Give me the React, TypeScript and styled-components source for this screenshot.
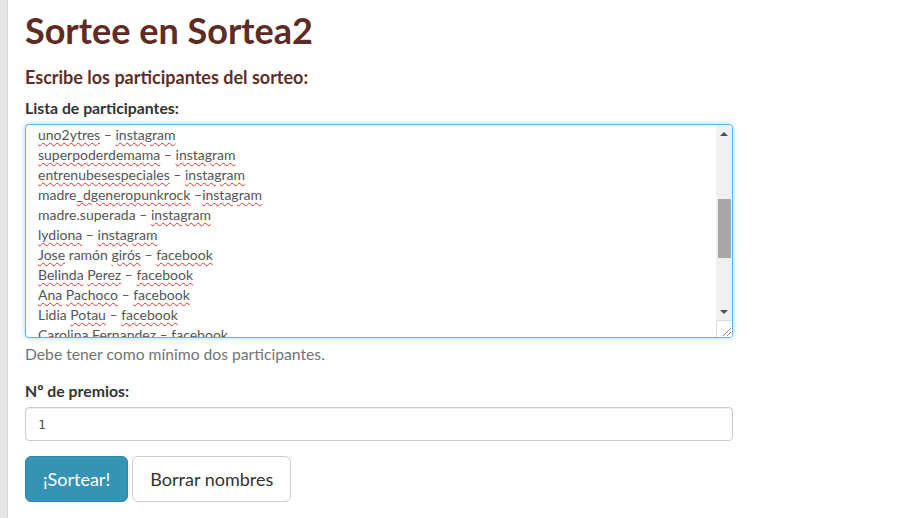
import React from "react";
import styled, { createGlobalStyle } from "styled-components";

const Global = createGlobalStyle`
  html, body { margin: 0; padding: 0; background: #fff; }
  body { font-family: Lato, "Open Sans", sans-serif; color: #333; }
`;

const Page = styled.div`
  display: flex;
  min-height: 518px;
`;

const SideStrip = styled.div`
  width: 7px;
  flex: 0 0 7px;
  background: #e6e6e6;
  border-right: 1px solid #d6d6d6;
`;

const Main = styled.main`
  padding-left: 17px;
  width: 708px;
`;

const Title = styled.h1`
  margin: 10px 0 0;
  font-size: 36px;
  line-height: 40px;
  font-weight: 700;
  color: #5e2b25;
`;

const Subtitle = styled.h3`
  margin: 17px 0 0;
  font-size: 18px;
  line-height: 20px;
  font-weight: 700;
  color: #5e2f29;
`;

const Label = styled.label<{ $top: number }>`
  display: block;
  margin: ${(p) => p.$top}px 0 6px;
  font-size: 15.8px;
  line-height: 20px;
  font-weight: 700;
  color: #333;
`;

const ListFrame = styled.div`
  box-sizing: border-box;
  display: flex;
  height: 214px;
  border: 1px solid #66afe9;
  border-radius: 4px;
  box-shadow: inset 0 1px 1px rgba(0, 0, 0, 0.05), 0 0 5px rgba(102, 175, 233, 0.55);
  background: #fff;
  overflow: hidden;
`;

const ListText = styled.div`
  flex: 1;
  padding: 0 12px;
  overflow: hidden;
  font-size: 14px;
  line-height: 20px;
  color: #555;
`;

const ScrollBar = styled.div`
  width: 16px;
  flex: 0 0 16px;
  display: flex;
  flex-direction: column;
  background: #f0f0f0;
`;

const ArrowButton = styled.div<{ $down?: boolean }>`
  height: 17px;
  display: flex;
  align-items: center;
  justify-content: center;
  &::after {
    content: "";
    width: 0;
    height: 0;
    border-left: 4px solid transparent;
    border-right: 4px solid transparent;
    ${(p) => (p.$down ? "border-top: 4px solid #4f4f4f;" : "border-bottom: 4px solid #4f4f4f;")}
  }
`;

const Track = styled.div`
  flex: 1;
  display: flex;
  flex-direction: column;
  align-items: center;
`;

const Thumb = styled.div`
  margin-top: 57px;
  width: 13px;
  height: 59px;
  background: #a8a8a8;
`;

const Resizer = styled.div`
  box-sizing: border-box;
  height: 17px;
  background: #fff;
  border-top: 1px solid #dcdcdc;
  border-left: 1px solid #dcdcdc;
  display: flex;
  align-items: flex-end;
  justify-content: flex-end;
  svg { display: block; }
`;

const Line = styled.div`
  white-space: nowrap;
`;

const Miss = styled.span`
  text-decoration: underline wavy #e0352e;
  text-decoration-thickness: 1px;
  text-underline-offset: 2px;
`;

const Help = styled.p`
  margin: 6px 0 0;
  font-size: 15.7px;
  line-height: 20px;
  color: #737373;
`;

const NumberInput = styled.input`
  box-sizing: border-box;
  display: block;
  width: 100%;
  height: 34px;
  padding: 6px 12px;
  border: 1px solid #ccc;
  border-radius: 4px;
  box-shadow: inset 0 1px 1px rgba(0, 0, 0, 0.075);
  font-family: "DejaVu Sans Mono", "Liberation Mono", monospace;
  font-size: 13px;
  color: #555;
  outline: none;
  &::-webkit-inner-spin-button { display: none; }
`;

const Actions = styled.div`
  display: flex;
  gap: 4px;
  margin-top: 15px;
`;

const Button = styled.button<{ $primary?: boolean }>`
  box-sizing: border-box;
  height: 46px;
  padding: 10px 17px;
  border-radius: 6px;
  font-family: Lato, "Open Sans", sans-serif;
  font-size: 18px;
  line-height: 24px;
  cursor: pointer;
  border: 1px solid ${(p) => (p.$primary ? "#2f87a5" : "#ccc")};
  background: ${(p) => (p.$primary ? "#3593b3" : "#fff")};
  color: ${(p) => (p.$primary ? "#fff" : "#333")};
`;

type Part = string | { w: string };
const M = (w: string): Part => ({ w });

const lines: Part[][] = [
  [M("uno2ytres"), " – ", M("instagram")],
  [M("superpoderdemama"), " – ", M("instagram")],
  [M("entrenubesespeciales"), " – ", M("instagram")],
  ["madre", M("_dgeneropunkrock"), " –", M("instagram")],
  ["madre.superada – ", M("instagram")],
  [M("lydiona"), " – ", M("instagram")],
  [M("Jose"), " ramón ", M("girós"), " – ", M("facebook")],
  [M("Belinda"), " ", M("Perez"), " – ", M("facebook")],
  [M("Ana"), " ", M("Pachoco"), " – ", M("facebook")],
  ["Lidia ", M("Potau"), " – ", M("facebook")],
  ["Carolina ", M("Fernandez"), " – ", M("facebook")],
];

export default function App() {
  return (
    <>
      <Global />
      <Page>
        <SideStrip />
        <Main>
          <Title>Sortee en Sortea2</Title>
          <Subtitle>Escribe los participantes del sorteo:</Subtitle>
          <Label $top={11}>Lista de participantes:</Label>
          <ListFrame>
            <ListText>
              {lines.map((parts, i) => (
                <Line key={i}>
                  {parts.map((p, j) =>
                    typeof p === "string" ? (
                      <React.Fragment key={j}>{p}</React.Fragment>
                    ) : (
                      <Miss key={j}>{p.w}</Miss>
                    )
                  )}
                </Line>
              ))}
            </ListText>
            <ScrollBar>
              <ArrowButton />
              <Track>
                <Thumb />
              </Track>
              <ArrowButton $down />
              <Resizer>
                <svg width="12" height="12" viewBox="0 0 12 12">
                  <path d="M11 3 L3 11 M11 7 L7 11" stroke="#8a8a8a" strokeWidth="1" fill="none" />
                </svg>
              </Resizer>
            </ScrollBar>
          </ListFrame>
          <Help>Debe tener como mínimo dos participantes.</Help>
          <Label $top={17}>Nº de premios:</Label>
          <NumberInput type="number" defaultValue={1} />
          <Actions>
            <Button $primary>¡Sortear!</Button>
            <Button>Borrar nombres</Button>
          </Actions>
        </Main>
      </Page>
    </>
  );
}
